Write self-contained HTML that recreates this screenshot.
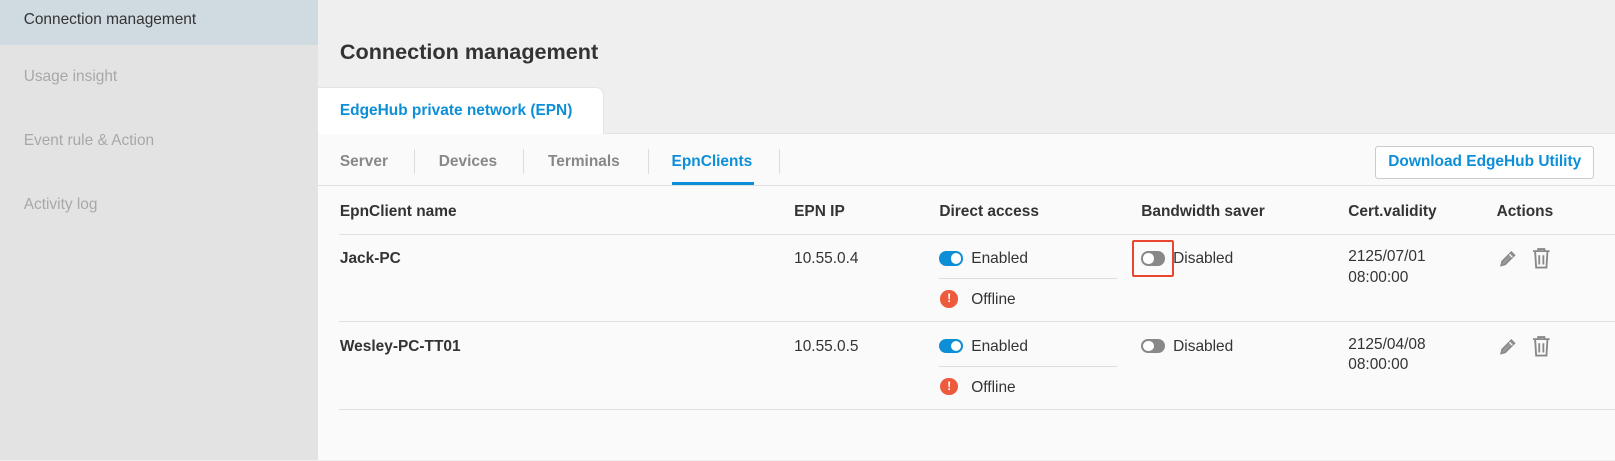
<!DOCTYPE html>
<html style="width:1615px;height:461px;overflow:hidden"><head><style>
*{margin:0;padding:0;box-sizing:border-box}
body{width:1615px;height:461px;overflow:hidden;font-family:"Liberation Sans",Arial,sans-serif;background:#efefef;position:relative;color:#333}
#w{position:absolute;left:0;top:0;width:1568px;height:447px;zoom:1.03;overflow:hidden}
.side{position:absolute;left:0;top:0;width:309px;height:447px;background:#e3e3e3}
.side .it{position:absolute;left:23px;font-size:15px;color:#a8a8a8}
.side .act{position:absolute;left:0;top:0;width:309px;height:44px;background:#d0dbe1}
.main{position:absolute;left:309px;top:0;right:0;height:447px}
h1{position:absolute;left:21px;top:38px;font-size:21px;font-weight:bold;color:#333}
.tab{position:absolute;left:0;top:84px;width:277px;height:46px;background:#fff;border-top-right-radius:8px;border:1px solid #e4e4e4;border-left:none;border-bottom:none}
.tab span{position:absolute;left:21px;top:14px;font-size:15px;font-weight:bold;color:#0d8fd8}
.panel{position:absolute;left:0;top:129px;right:0;bottom:0;background:#fafafa;border-top:1px solid #e4e4e4}
.sub{position:absolute;top:19px;font-size:15px;font-weight:bold;color:#888}
.sep{position:absolute;top:15px;width:1px;height:24px;background:#ddd}
.btn{position:absolute;left:1026px;top:12px;width:213px;height:32px;border:1px solid #ccc;border-radius:3px;background:#fff;color:#0d8fd8;font-weight:bold;font-size:15px;text-align:center;line-height:30px}
.hl{position:absolute;left:0;right:0;height:1px;background:#e2e2e2}
.t{position:absolute;font-size:15px;color:#333}
.b{font-weight:bold}
.tg{position:absolute;width:23px;height:14px;border-radius:7px}
.tg i{position:absolute;top:2px;width:10px;height:10px;border-radius:50%;background:#fff}
.ex{position:absolute;width:17px;height:17px;border-radius:50%;background:#ee5a3c;color:#fff;font-weight:bold;font-size:12px;text-align:center;line-height:17px}
</style></head><body><div id="w">
<div class="side">
<div class="act"></div>
<div class="it" style="top:11px;color:#333">Connection management</div>
<div class="it" style="top:66px">Usage insight</div>
<div class="it" style="top:128px">Event rule &amp; Action</div>
<div class="it" style="top:190px">Activity log</div>
</div>
<div class="main">
<h1>Connection management</h1>
<div class="panel">
<div class="sub" style="left:21px">Server</div><div class="sep" style="left:93px"></div>
<div class="sub" style="left:117px">Devices</div><div class="sep" style="left:199px"></div>
<div class="sub" style="left:223px">Terminals</div><div class="sep" style="left:320px"></div>
<div class="sub" style="left:343px;color:#0d8fd8">EpnClients</div><div class="sep" style="left:447px"></div>
<div style="position:absolute;left:343px;top:47px;width:80px;height:3px;background:#0d8fd8"></div>
<div class="btn">Download EdgeHub Utility</div>
<div class="hl" style="top:50px"></div>
<div class="t b" style="left:21px;top:67px">EpnClient name</div>
<div class="t b" style="left:462px;top:67px">EPN IP</div>
<div class="t b" style="left:603px;top:67px">Direct access</div>
<div class="t b" style="left:799px;top:67px">Bandwidth saver</div>
<div class="t b" style="left:1000px;top:67px">Cert.validity</div>
<div class="t b" style="left:1144px;top:67px">Actions</div>
<div class="hl" style="top:97px;left:20px"></div>
<div class="t b" style="left:21px;top:113px">Jack-PC</div>
<div class="t" style="left:462px;top:113px">10.55.0.4</div>
<div class="tg" style="left:603px;top:114px;background:#0d8fd8"><i style="left:11px"></i></div>
<div class="t" style="left:634px;top:113px">Enabled</div>
<div style="position:absolute;left:603px;top:140px;width:172px;height:1px;background:#ddd"></div>
<div class="ex" style="left:604px;top:152px">!</div>
<div class="t" style="left:634px;top:153px">Offline</div>
<div style="position:absolute;left:790px;top:103px;width:41px;height:36px;border:2px solid #e8462e;border-radius:2px"></div>
<div class="tg" style="left:799px;top:114px;background:#888"><i style="left:2px"></i></div>
<div class="t" style="left:830px;top:113px">Disabled</div>
<div class="t" style="left:1000px;line-height:20px;top:110px">2125/07/01<br>08:00:00</div>
<svg style="position:absolute;left:1145px;top:111px" width="20" height="20" viewBox="0 0 20 20"><path d="M3 17l1-4 9-9 3 3-9 9z" fill="#999" stroke="#888" stroke-width="1.5"/><path d="M11 6l3 3" stroke="#fafafa" stroke-width="1.2"/></svg>
<svg style="position:absolute;left:1177px;top:110px" width="20" height="22" viewBox="0 0 20 22"><path d="M2 4h16M7 4V2h6v2M4 4l1 16h10l1-16M8 8v9M12 8v9" fill="none" stroke="#888" stroke-width="1.8"/></svg>
<div class="hl" style="top:182px;left:20px"></div>
<div class="t b" style="left:21px;top:198px">Wesley-PC-TT01</div>
<div class="t" style="left:462px;top:198px">10.55.0.5</div>
<div class="tg" style="left:603px;top:199px;background:#0d8fd8"><i style="left:11px"></i></div>
<div class="t" style="left:634px;top:198px">Enabled</div>
<div style="position:absolute;left:603px;top:225px;width:172px;height:1px;background:#ddd"></div>
<div class="ex" style="left:604px;top:237px">!</div>
<div class="t" style="left:634px;top:238px">Offline</div>
<div class="tg" style="left:799px;top:199px;background:#888"><i style="left:2px"></i></div>
<div class="t" style="left:830px;top:198px">Disabled</div>
<div class="t" style="left:1000px;line-height:20px;top:195px">2125/04/08<br>08:00:00</div>
<svg style="position:absolute;left:1145px;top:196px" width="20" height="20" viewBox="0 0 20 20"><path d="M3 17l1-4 9-9 3 3-9 9z" fill="#999" stroke="#888" stroke-width="1.5"/><path d="M11 6l3 3" stroke="#fafafa" stroke-width="1.2"/></svg>
<svg style="position:absolute;left:1177px;top:195px" width="20" height="22" viewBox="0 0 20 22"><path d="M2 4h16M7 4V2h6v2M4 4l1 16h10l1-16M8 8v9M12 8v9" fill="none" stroke="#888" stroke-width="1.8"/></svg>
<div class="hl" style="top:267px;left:20px"></div>
</div>
<div class="tab"><span>EdgeHub private network (EPN)</span></div>
</div>
</div></body></html>
